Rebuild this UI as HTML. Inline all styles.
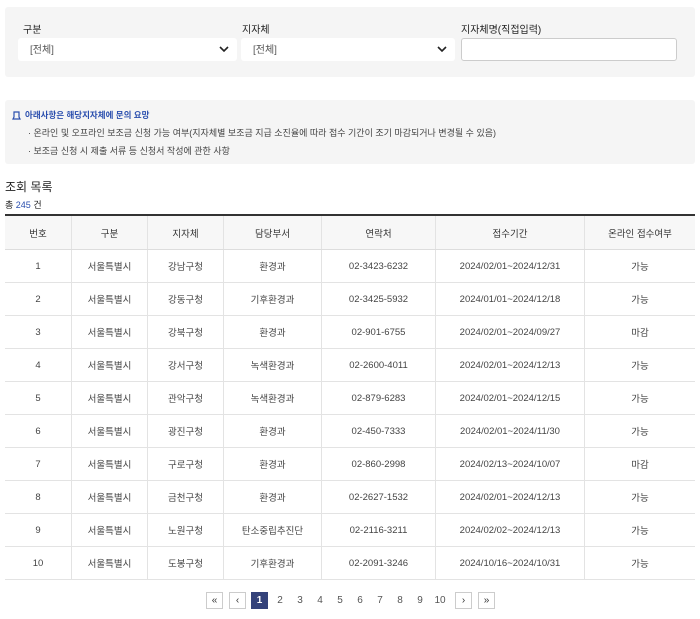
<!DOCTYPE html><html><head><meta charset="utf-8"><style>
body{margin:0;width:700px;height:619px;background:#fff;font-family:"Liberation Sans","Noto Sans CJK KR",sans-serif;color:#333;position:relative;overflow:hidden}
.a{position:absolute;line-height:1.2}
.box{background:#f5f5f5;border-radius:3px}
.lbl{font-size:10px;color:#222;line-height:12px}
.sel{background:#fff;border-radius:3px;font-size:10px;color:#555;height:23px;padding-left:12px;box-sizing:border-box}
.sel svg{position:absolute;right:8px;top:8px}
table{border-collapse:collapse;position:absolute;left:5px;top:214px;width:690px;font-size:9.5px;color:#444}
th{background:#f7f7f7;font-weight:normal;height:33px;border-top:2px solid #333;border-bottom:1px solid #ddd;color:#333}
td{height:32px;border-bottom:1px solid #e3e3e3;text-align:center}
th,td{border-left:1px solid #e3e3e3;padding:0}
th:first-child,td:first-child{border-left:none}
.pg{position:absolute;top:592px;height:17px;font-size:10px;line-height:17px;text-align:center;color:#555}
.pb{border:1px solid #ccc;box-sizing:border-box;width:17px;color:#333;line-height:15px}
</style></head><body>
<div class="a box" style="left:5px;top:7px;width:690px;height:70px"></div>
<div class="a lbl" style="left:23px;top:25px">구분</div>
<div class="a lbl" style="left:242px;top:25px">지자체</div>
<div class="a lbl" style="left:461px;top:25px">지자체명(직접입력)</div>
<div class="a sel" style="left:18px;top:38px;width:219px;line-height:25px">[전체]<svg width="10" height="7"><path d="M1 1l4 4 4-4" fill="none" stroke="#222" stroke-width="1.6"/></svg></div>
<div class="a sel" style="left:241px;top:38px;width:214px;line-height:25px">[전체]<svg width="10" height="7"><path d="M1 1l4 4 4-4" fill="none" stroke="#222" stroke-width="1.6"/></svg></div>
<div class="a sel" style="left:461px;top:38px;width:216px;border:1px solid #ccc"></div>
<div class="a box" style="left:5px;top:100px;width:690px;height:64px"></div>
<svg class="a" style="left:12px;top:111px" width="9" height="9"><path d="M2 1h5v5l1 2H1l1-2z" fill="none" stroke="#2b4fae" stroke-width="1.2"/></svg>
<div class="a" style="left:25px;top:110px;font-size:8.5px;color:#2b4fae;font-weight:bold">아래사항은 해당지자체에 문의 요망</div>
<div class="a" style="left:28px;top:128px;font-size:9px;color:#444">· 온라인 및 오프라인 보조금 신청 가능 여부(지자체별 보조금 지급 소진율에 따라 접수 기간이 조기 마감되거나 변경될 수 있음)</div>
<div class="a" style="left:28px;top:146px;font-size:9px;color:#444">· 보조금 신청 시 제출 서류 등 신청서 작성에 관한 사항</div>
<div class="a" style="left:5px;top:180px;font-size:12px;color:#222">조회 목록</div>
<div class="a" style="left:5px;top:200px;font-size:9px;color:#222">총 <span style="color:#2b4fae">245</span> 건</div>
<table>
<tr><th style="width:66px">번호</th><th style="width:75px">구분</th><th style="width:75px">지자체</th><th style="width:97px">담당부서</th><th style="width:113px">연락처</th><th style="width:148px">접수기간</th><th>온라인 접수여부</th></tr>
<tr><td>1</td><td>서울특별시</td><td>강남구청</td><td>환경과</td><td>02-3423-6232</td><td>2024/02/01~2024/12/31</td><td>가능</td></tr>
<tr><td>2</td><td>서울특별시</td><td>강동구청</td><td>기후환경과</td><td>02-3425-5932</td><td>2024/01/01~2024/12/18</td><td>가능</td></tr>
<tr><td>3</td><td>서울특별시</td><td>강북구청</td><td>환경과</td><td>02-901-6755</td><td>2024/02/01~2024/09/27</td><td>마감</td></tr>
<tr><td>4</td><td>서울특별시</td><td>강서구청</td><td>녹색환경과</td><td>02-2600-4011</td><td>2024/02/01~2024/12/13</td><td>가능</td></tr>
<tr><td>5</td><td>서울특별시</td><td>관악구청</td><td>녹색환경과</td><td>02-879-6283</td><td>2024/02/01~2024/12/15</td><td>가능</td></tr>
<tr><td>6</td><td>서울특별시</td><td>광진구청</td><td>환경과</td><td>02-450-7333</td><td>2024/02/01~2024/11/30</td><td>가능</td></tr>
<tr><td>7</td><td>서울특별시</td><td>구로구청</td><td>환경과</td><td>02-860-2998</td><td>2024/02/13~2024/10/07</td><td>마감</td></tr>
<tr><td>8</td><td>서울특별시</td><td>금천구청</td><td>환경과</td><td>02-2627-1532</td><td>2024/02/01~2024/12/13</td><td>가능</td></tr>
<tr><td>9</td><td>서울특별시</td><td>노원구청</td><td>탄소중립추진단</td><td>02-2116-3211</td><td>2024/02/02~2024/12/13</td><td>가능</td></tr>
<tr><td>10</td><td>서울특별시</td><td>도봉구청</td><td>기후환경과</td><td>02-2091-3246</td><td>2024/10/16~2024/10/31</td><td>가능</td></tr>
</table>
<div class="pg pb" style="left:206px">«</div>
<div class="pg pb" style="left:229px">‹</div>
<div class="pg" style="left:251px;width:17px;background:#34427a;color:#fff;font-weight:bold">1</div>
<div class="pg" style="left:272px;width:16px">2</div>
<div class="pg" style="left:292px;width:16px">3</div>
<div class="pg" style="left:312px;width:16px">4</div>
<div class="pg" style="left:332px;width:16px">5</div>
<div class="pg" style="left:352px;width:16px">6</div>
<div class="pg" style="left:372px;width:16px">7</div>
<div class="pg" style="left:392px;width:16px">8</div>
<div class="pg" style="left:412px;width:16px">9</div>
<div class="pg" style="left:431px;width:18px">10</div>
<div class="pg pb" style="left:455px">›</div>
<div class="pg pb" style="left:478px">»</div>
</body></html>
